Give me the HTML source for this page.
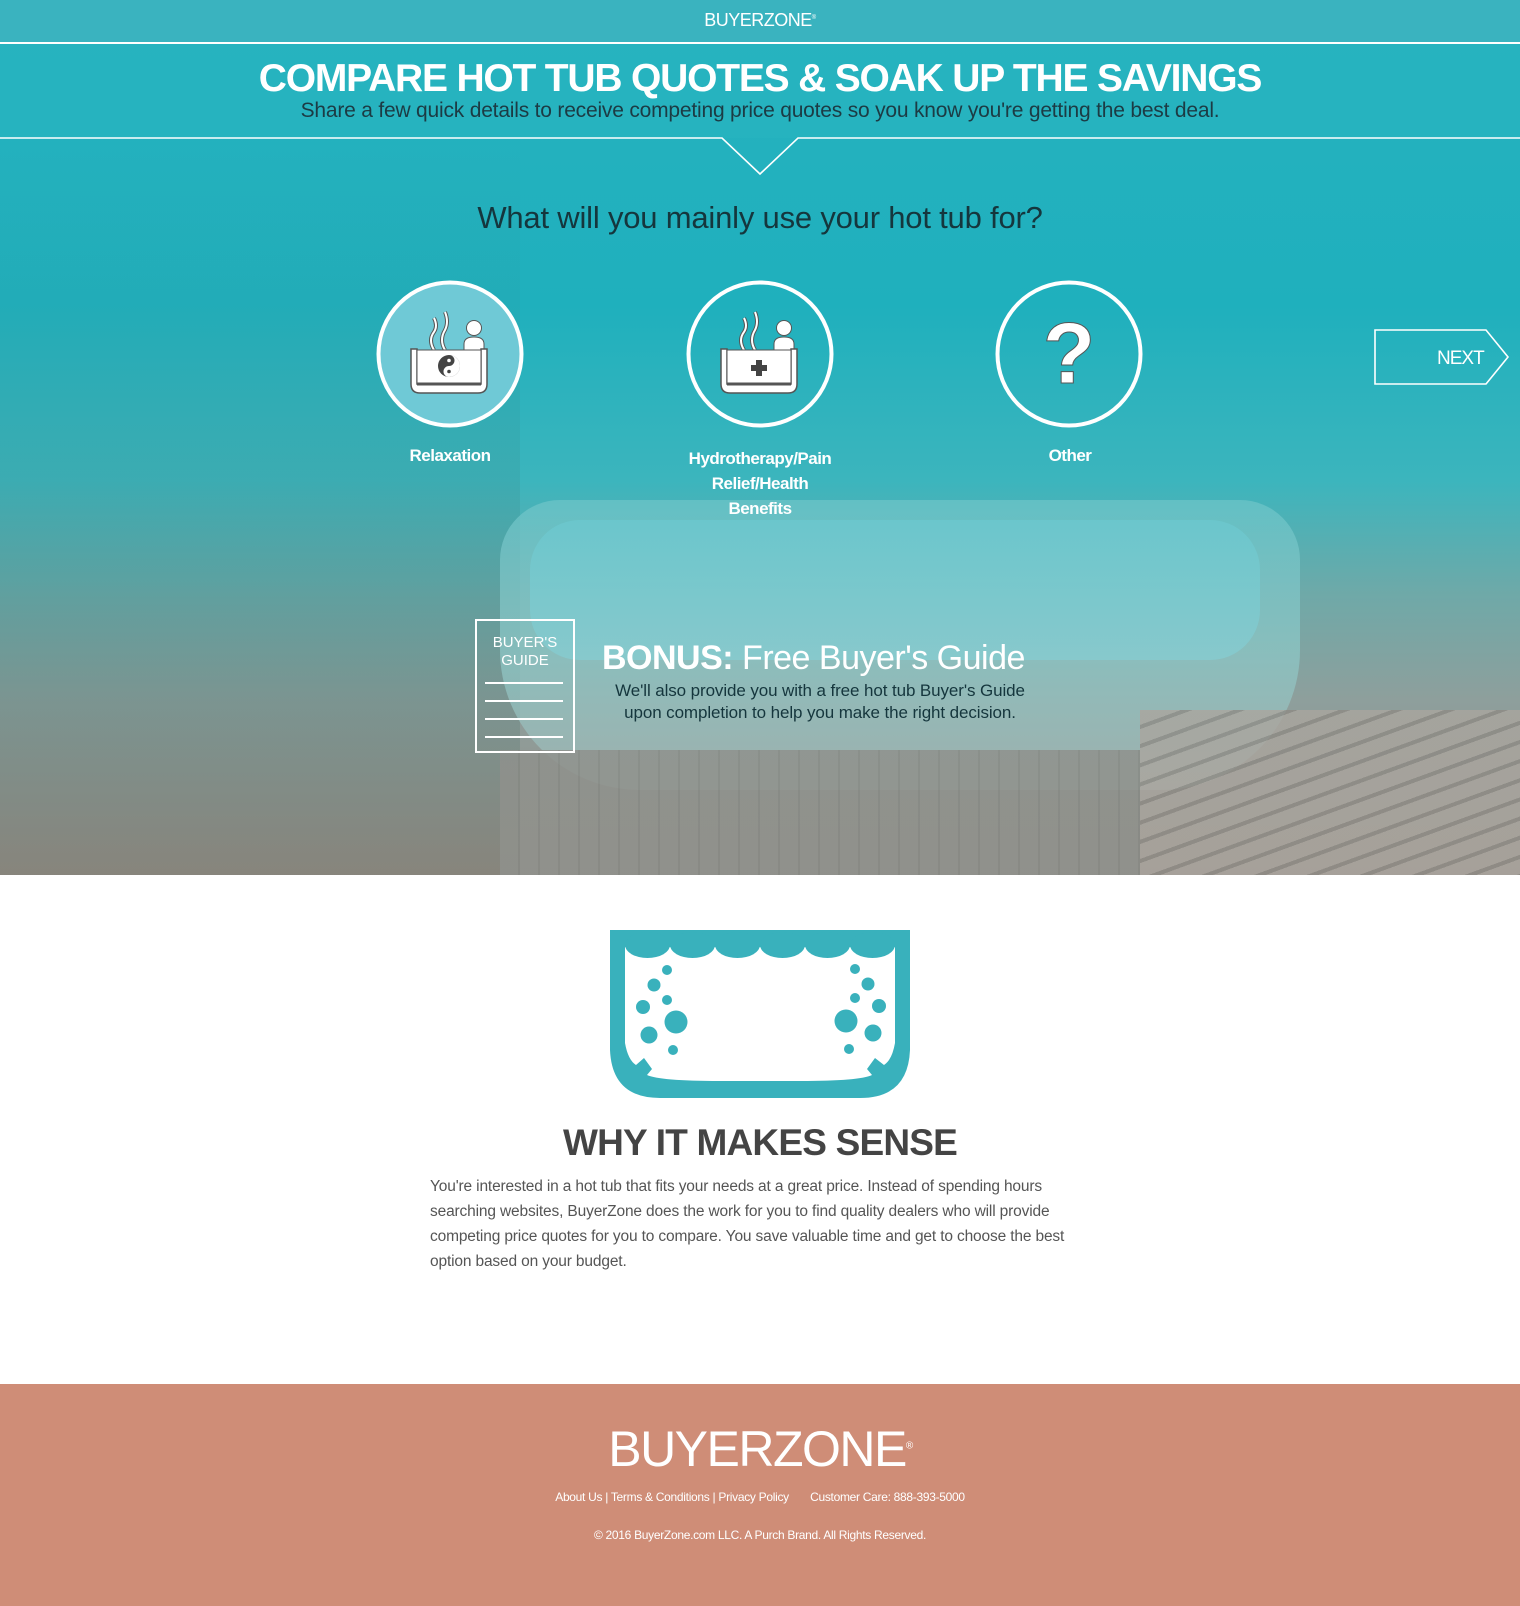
<!DOCTYPE html>
<html><head><meta charset="utf-8">
<style>
*{margin:0;padding:0;box-sizing:border-box}
body{width:1520px;height:1606px;overflow:hidden;font-family:"Liberation Sans",sans-serif;background:#fff;position:relative}
.hero{position:absolute;left:0;top:0;width:1520px;height:875px;overflow:hidden;
background:linear-gradient(180deg,#27b2bf 0%,#1fb0bd 35%,#3cb5bd 55%,#6fa9a8 68%,#8e9f9c 80%,#948f88 100%)}
.abs{position:absolute}
.c{text-align:center;left:0;width:1520px}
</style></head><body>
<div class="hero">
  <div class="abs" style="left:0;top:140px;width:520px;height:735px;background:linear-gradient(180deg,rgba(20,160,170,0) 0%,rgba(60,140,140,.3) 60%,rgba(120,120,110,.45) 100%)"></div>
  <div class="abs" style="left:500px;top:500px;width:800px;height:290px;border-radius:60px 60px 140px 140px;background:linear-gradient(180deg,#6cc4c8,#8ec6c5 55%,#a3b8b5);opacity:.75"></div>
  <div class="abs" style="left:530px;top:520px;width:730px;height:140px;border-radius:50px;background:linear-gradient(180deg,#6cc9d0,#86ced3);opacity:.7"></div>
  <div class="abs" style="left:500px;top:750px;width:640px;height:125px;background:repeating-linear-gradient(90deg,#8f918c 0 18px,#878984 18px 20px);opacity:.85"></div>
  <div class="abs" style="left:1140px;top:710px;width:380px;height:165px;background:repeating-linear-gradient(160deg,#aaa59e 0 14px,#8e8a84 14px 18px);opacity:.8"></div>

  <div class="abs" style="left:0;top:0;width:1520px;height:42px;background:#3ab3bf"></div>
  <div class="abs c" style="top:10px;color:#fff;font-size:18px;letter-spacing:-.5px">BUYERZONE<sup style="font-size:6px">®</sup></div>
  <div class="abs" style="left:0;top:42px;width:1520px;height:2px;background:#fff"></div>
  <div class="abs" style="left:0;top:44px;width:1520px;height:94px;background:rgba(40,180,192,.55)"></div>
  <div class="abs c" style="top:57px;color:#fff;font-size:39px;font-weight:bold;letter-spacing:-1.2px">COMPARE HOT TUB QUOTES &amp; SOAK UP THE SAVINGS</div>
  <div class="abs c" style="top:99px;color:#1c3b44;font-size:21px;letter-spacing:-.2px">Share a few quick details to receive competing price quotes so you know you're getting the best deal.</div>
  <svg class="abs" style="left:0;top:136px" width="1520" height="42"><polyline points="0,2 722,2 760,38 798,2 1520,2" fill="none" stroke="#fff" stroke-width="1.6"/></svg>
  <div class="abs c" style="top:200px;color:#15363d;font-size:31px;letter-spacing:-.2px">What will you mainly use your hot tub for?</div>

  <svg class="abs" style="left:376px;top:280px" width="148" height="148" viewBox="0 0 148 148">
    <circle cx="74" cy="74" r="71.5" fill="#6fc9d6" stroke="#fff" stroke-width="4"/>
    <path d="M58 70 Q52 60 58 52 Q62 46 58 38" fill="none" stroke="#555" stroke-width="4"/><path d="M58 70 Q52 60 58 52 Q62 46 58 38" fill="none" stroke="#fff" stroke-width="2"/>
    <path d="M69 70 Q63 60 69 50 Q73 42 69 32" fill="none" stroke="#555" stroke-width="4"/><path d="M69 70 Q63 60 69 50 Q73 42 69 32" fill="none" stroke="#fff" stroke-width="2"/>
    <circle cx="98" cy="48" r="7.5" fill="#fff" stroke="#555" stroke-width="1"/>
    <path d="M88 70 V64 Q88 57 98 57 Q108 57 108 64 V70Z" fill="#fff" stroke="#555"/>
    <path d="M35 69 H41 V104 H105 V69 H111 V104 Q111 113 102 113 H44 Q35 113 35 104Z" fill="#fff" stroke="#555" stroke-width="1.5"/>
    <rect x="41" y="70" width="64" height="33" fill="#fff" stroke="#555"/>
    <line x1="41" y1="104" x2="105" y2="104" stroke="#555" stroke-width="3"/>
    <circle cx="73" cy="86" r="11" fill="#444"/>
    <path d="M73 75 A5.5 5.5 0 0 1 73 86 A5.5 5.5 0 0 0 73 97 A11 11 0 0 0 73 75Z" fill="#fff"/>
    <circle cx="73" cy="80.5" r="1.8" fill="#fff"/><circle cx="73" cy="91.5" r="1.8" fill="#444"/>
  </svg>
  <svg class="abs" style="left:686px;top:280px" width="148" height="148" viewBox="0 0 148 148">
    <circle cx="74" cy="74" r="71.5" fill="none" stroke="#fff" stroke-width="4"/>
    <path d="M58 70 Q52 60 58 52 Q62 46 58 38" fill="none" stroke="#555" stroke-width="4"/><path d="M58 70 Q52 60 58 52 Q62 46 58 38" fill="none" stroke="#fff" stroke-width="2"/>
    <path d="M69 70 Q63 60 69 50 Q73 42 69 32" fill="none" stroke="#555" stroke-width="4"/><path d="M69 70 Q63 60 69 50 Q73 42 69 32" fill="none" stroke="#fff" stroke-width="2"/>
    <circle cx="98" cy="48" r="7.5" fill="#fff" stroke="#555" stroke-width="1"/>
    <path d="M88 70 V64 Q88 57 98 57 Q108 57 108 64 V70Z" fill="#fff" stroke="#555"/>
    <path d="M35 69 H41 V104 H105 V69 H111 V104 Q111 113 102 113 H44 Q35 113 35 104Z" fill="#fff" stroke="#555" stroke-width="1.5"/>
    <rect x="41" y="70" width="64" height="33" fill="#fff" stroke="#555"/>
    <line x1="41" y1="104" x2="105" y2="104" stroke="#555" stroke-width="3"/>
    <path d="M70 80 H76 V85 H81 V91 H76 V96 H70 V91 H65 V85 H70Z" fill="#444"/>
  </svg>
  <svg class="abs" style="left:995px;top:280px" width="148" height="148" viewBox="0 0 148 148">
    <circle cx="74" cy="74" r="71.5" fill="none" stroke="#fff" stroke-width="4"/>
    <text x="74" y="103" text-anchor="middle" font-family="Liberation Sans" font-weight="bold" font-size="86" fill="#fff" stroke="#555" stroke-width="1">?</text>
  </svg>
  <div class="abs" style="left:350px;top:446px;width:200px;text-align:center;color:#fff;font-weight:bold;font-size:17px;letter-spacing:-.5px">Relaxation</div>
  <div class="abs" style="left:660px;top:446px;width:200px;text-align:center;color:#fff;font-weight:bold;font-size:17px;line-height:25px;letter-spacing:-.5px">Hydrotherapy/Pain<br>Relief/Health<br>Benefits</div>
  <div class="abs" style="left:970px;top:446px;width:200px;text-align:center;color:#fff;font-weight:bold;font-size:17px;letter-spacing:-.5px">Other</div>

  <svg class="abs" style="left:1374px;top:329px" width="138" height="57"><polygon points="1,1 112,1 134,28 112,55 1,55" fill="none" stroke="#fff" stroke-width="1.6"/></svg>
  <div class="abs" style="left:1437px;top:348px;color:#fff;font-size:19px;letter-spacing:-1px">NEXT</div>

  <div class="abs" style="left:475px;top:619px;width:100px;height:134px;border:2px solid #fff"></div>
  <div class="abs" style="left:475px;top:634px;width:100px;text-align:center;color:#fff;font-size:15px;line-height:18px">BUYER'S<br>GUIDE</div>
  <div class="abs" style="left:485px;top:682px;width:78px;height:2px;background:#fff;box-shadow:0 18px 0 #fff,0 36px 0 #fff,0 54px 0 #fff"></div>
  <div class="abs" style="left:602px;top:639px;color:#fff;font-size:34px;letter-spacing:-.5px"><b>BONUS:</b> Free Buyer's Guide</div>
  <div class="abs" style="left:598px;top:680px;width:444px;text-align:center;color:#15363d;font-size:17px;line-height:22px;letter-spacing:-.1px">We'll also provide you with a free hot tub Buyer's Guide<br>upon completion to help you make the right decision.</div>
</div>

<svg class="abs" style="left:600px;top:925px" width="320" height="180" viewBox="0 0 320 180">
  <path d="M10 5 H310 V125 Q308 173 260 173 H60 Q12 173 10 125Z" fill="#39b1bc"/>
  <path d="M25 20 H295 V118 Q292 135 284 140 L275 133 L267 144 L272 150 Q260 156 200 156 H120 Q60 156 47 150 L52 144 L44 133 L36 140 Q28 135 25 118Z" fill="#fff"/>
  <rect x="25" y="18" width="270" height="4" fill="#39b1bc"/>
  <g fill="#39b1bc">
    <ellipse cx="47.5" cy="20" rx="22.5" ry="13"/><ellipse cx="92.5" cy="20" rx="22.5" ry="13"/><ellipse cx="137.5" cy="20" rx="22.5" ry="13"/><ellipse cx="182.5" cy="20" rx="22.5" ry="13"/><ellipse cx="227.5" cy="20" rx="22.5" ry="13"/><ellipse cx="272.5" cy="20" rx="22.5" ry="13"/>
    <circle cx="67" cy="45" r="5"/><circle cx="54" cy="60" r="6.5"/><circle cx="67" cy="75" r="5"/><circle cx="43" cy="82" r="7"/><circle cx="76" cy="97" r="11.5"/><circle cx="49" cy="110" r="8.5"/><circle cx="73" cy="125" r="5"/>
    <circle cx="255" cy="44" r="5"/><circle cx="268" cy="59" r="6.5"/><circle cx="255" cy="73" r="5"/><circle cx="279" cy="81" r="7"/><circle cx="246" cy="96" r="11.5"/><circle cx="273" cy="108" r="8.5"/><circle cx="249" cy="124" r="5"/>
  </g>
</svg>
<div class="abs c" style="top:1122px;color:#444;font-size:37px;font-weight:bold;letter-spacing:-.8px">WHY IT MAKES SENSE</div>
<div class="abs" style="left:430px;top:1174px;width:665px;color:#555;font-size:15.5px;line-height:25px;letter-spacing:-.15px">You're interested in a hot tub that fits your needs at a great price. Instead of spending hours searching websites, BuyerZone does the work for you to find quality dealers who will provide competing price quotes for you to compare. You save valuable time and get to choose the best option based on your budget.</div>

<div class="abs" style="left:0;top:1384px;width:1520px;height:222px;background:#cf8d77"></div>
<div class="abs c" style="top:1420px;color:#fff;font-size:50px;letter-spacing:-1.5px">BUYERZONE<sup style="font-size:10px">®</sup></div>
<div class="abs c" style="top:1490px;color:#fff;font-size:12px;letter-spacing:-.3px">About Us | Terms &amp; Conditions | Privacy Policy&nbsp;&nbsp;&nbsp;&nbsp;&nbsp;&nbsp;&nbsp;Customer Care: 888-393-5000</div>
<div class="abs c" style="top:1528px;color:#fff;font-size:12px;letter-spacing:-.3px">© 2016 BuyerZone.com LLC. A Purch Brand. All Rights Reserved.</div>
</body></html>
